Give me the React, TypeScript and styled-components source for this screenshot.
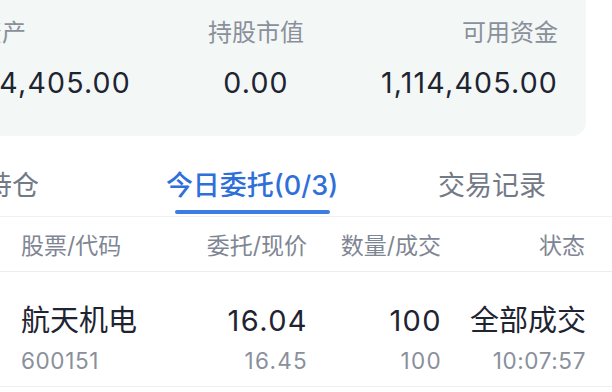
import React from 'react';
import styled, { createGlobalStyle } from 'styled-components';

const GlobalStyle = createGlobalStyle`
  html, body {
    margin: 0;
    padding: 0;
    background: #ffffff;
    overflow: hidden;
  }
  body {
    font-family: Inter, "Noto Sans CJK SC", sans-serif;
    color: #1e2431;
  }
`;

const summary = [
  { label: '总资产', value: '1,114,405.00', align: 'left' },
  { label: '持股市值', value: '0.00', align: 'center' },
  { label: '可用资金', value: '1,114,405.00', align: 'right' },
];

const tabs = [
  { title: '持仓', active: false },
  { title: '今日委托(0/3)', active: true },
  { title: '交易记录', active: false },
];

const orders = [
  {
    name: '航天机电',
    code: '600151',
    price: '16.04',
    current: '16.45',
    amount: '100',
    filled: '100',
    status: '全部成交',
    time: '10:07:57',
  },
];

function App() {
  return (
    <Page>
      <GlobalStyle />
      <Scroller>
        <SummaryCard>
          {summary.map((item) => (
            <SummaryItem key={item.label} align={item.align}>
              <SummaryLabel>{item.label}</SummaryLabel>
              <SummaryValue>{item.value}</SummaryValue>
            </SummaryItem>
          ))}
        </SummaryCard>
        <TabBar>
          {tabs.map((tab) => (
            <Tab key={tab.title}>
              <TabTitle active={tab.active}>{tab.title}</TabTitle>
              <TabLine active={tab.active} />
            </Tab>
          ))}
        </TabBar>
      </Scroller>

      <HeaderRow>
        <HeadCell>股票/代码</HeadCell>
        <HeadCell right>委托/现价</HeadCell>
        <HeadCell right>数量/成交</HeadCell>
        <HeadCell right>状态</HeadCell>
      </HeaderRow>

      {orders.map((o) => (
        <OrderRow key={o.code}>
          <Cell>
            <Main>{o.name}</Main>
            <Sub>{o.code}</Sub>
          </Cell>
          <Cell right>
            <Main num>{o.price}</Main>
            <Sub num>{o.current}</Sub>
          </Cell>
          <Cell right>
            <Main num>{o.amount}</Main>
            <Sub num>{o.filled}</Sub>
          </Cell>
          <Cell right>
            <Main>{o.status}</Main>
            <Sub>{o.time}</Sub>
          </Cell>
        </OrderRow>
      ))}
    </Page>
  );
}

export default App;

const Page = styled.div`
  width: 612px;
  height: 392px;
  overflow: hidden;
  background: #fff;
`;

// the top part is wider than the window and scrolled a little to the right
const Scroller = styled.div`
  width: 720px;
  margin-left: -108px;
`;

const SummaryCard = styled.div`
  margin: 0 26px;
  padding: 18px 28px 35px 36px;
  background: #f3f7f6;
  border-radius: 0 0 14px 14px;
  display: flex;
  justify-content: space-between;
`;

const SummaryItem = styled.div<{ align: string }>`
  display: flex;
  flex-direction: column;
  align-items: ${(p) =>
    p.align === 'left' ? 'flex-start' : p.align === 'right' ? 'flex-end' : 'center'};
  gap: 17px;
`;

const SummaryLabel = styled.div`
  font-size: 24px;
  line-height: 30px;
  color: #8a909b;
`;

const SummaryValue = styled.div`
  font-size: 28.5px;
  line-height: 36px;
  letter-spacing: 1.2px;
  color: #1e2431;
`;

const TabBar = styled.div`
  display: flex;
  height: 81px;
  border-bottom: 1px solid #eef1f3;
  box-sizing: border-box;
`;

const Tab = styled.div`
  flex: 1;
  display: flex;
  flex-direction: column;
  align-items: center;
  padding-top: 32px;
`;

const TabTitle = styled.div<{ active: boolean }>`
  font-size: 27px;
  line-height: 36px;
  white-space: nowrap;
  color: ${(p) => (p.active ? '#2f6fd9' : '#737a87')};
  font-weight: ${(p) => (p.active ? 500 : 400)};
`;

const TabLine = styled.div<{ active: boolean }>`
  margin-top: 6px;
  width: 155px;
  height: 4px;
  border-radius: 2px;
  background: ${(p) => (p.active ? '#3b7de3' : 'transparent')};
`;

const HeaderRow = styled.div`
  display: grid;
  grid-template-columns: 1fr 134px 134px 144px;
  padding: 0 27px 0 21px;
  height: 55px;
  align-items: center;
  border-bottom: 1px solid #eceef1;
  box-sizing: border-box;
`;

const HeadCell = styled.div<{ right?: boolean }>`
  font-size: 23px;
  color: #7f8693;
  text-align: ${(p) => (p.right ? 'right' : 'left')};
`;

const OrderRow = styled.div`
  display: grid;
  grid-template-columns: 1fr 134px 134px 144px;
  padding: 31px 26px 10px 21px;
  border-bottom: 1px solid #eceef1;
`;

const Cell = styled.div<{ right?: boolean }>`
  display: flex;
  flex-direction: column;
  gap: 7px;
  align-items: ${(p) => (p.right ? 'flex-end' : 'flex-start')};
`;

const Main = styled.div<{ num?: boolean }>`
  font-size: 29px;
  line-height: 36px;
  letter-spacing: ${(p) => (p.num ? '1.4px' : '0')};
  color: #1e2431;
`;

const Sub = styled.div<{ num?: boolean }>`
  font-size: 22.5px;
  line-height: 30px;
  letter-spacing: ${(p) => (p.num ? '1.3px' : '0.6px')};
  color: #8a909b;
`;
